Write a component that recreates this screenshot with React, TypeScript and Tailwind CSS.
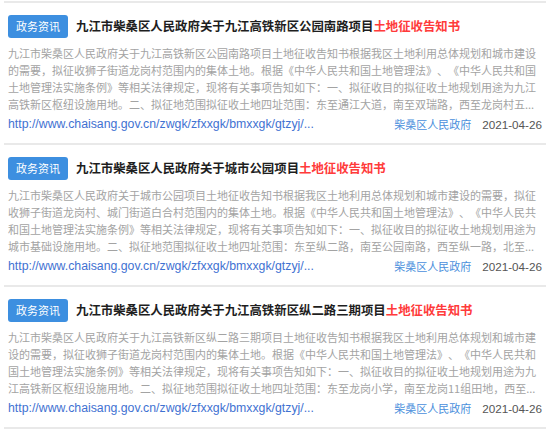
type NewsItem = {
    id: number,
    title: string,
    desc: string
};

const CJK = "font-['Noto_Sans_CJK_SC',sans-serif] [text-spacing-trim:space-all]";

const URL_TEXT = "http://www.chaisang.gov.cn/zwgk/zfxxgk/bmxxgk/gtzyj/...";

const items: NewsItem[] = [
    {
        id: 1,
        title: "九江市柴桑区人民政府关于九江高铁新区公园南路项目",
        desc: "九江市柴桑区人民政府关于九江高铁新区公园南路项目土地征收告知书根据我区土地利用总体规划和城市建设的需要，拟征收狮子街道龙岗村范围内的集体土地。根据《中华人民共和国土地管理法》、《中华人民共和国土地管理法实施条例》等相关法律规定，现将有关事项告知如下：一、拟征收目的拟征收土地规划用途为九江高铁新区枢纽设施用地。二、拟征地范围拟征收土地四址范围：东至通江大道，南至双瑞路，西至龙岗村五..."
    },
    {
        id: 2,
        title: "九江市柴桑区人民政府关于城市公园项目",
        desc: "九江市柴桑区人民政府关于城市公园项目土地征收告知书根据我区土地利用总体规划和城市建设的需要，拟征收狮子街道龙岗村、城门街道白合村范围内的集体土地。根据《中华人民共和国土地管理法》、《中华人民共和国土地管理法实施条例》等相关法律规定，现将有关事项告知如下：一、拟征收目的拟征收土地规划用途为城市基础设施用地。二、拟征地范围拟征收土地四址范围：东至纵二路，南至公园南路，西至纵一路，北至..."
    },
    {
        id: 3,
        title: "九江市柴桑区人民政府关于九江高铁新区纵二路三期项目",
        desc: "九江市柴桑区人民政府关于九江高铁新区纵二路三期项目土地征收告知书根据我区土地利用总体规划和城市建设的需要，拟征收狮子街道龙岗村范围内的集体土地。根据《中华人民共和国土地管理法》、《中华人民共和国土地管理法实施条例》等相关法律规定，现将有关事项告知如下：一、拟征收目的拟征收土地规划用途为九江高铁新区枢纽设施用地。二、拟征地范围拟征收土地四址范围：东至龙岗小学，南至龙岗11组田地，西至..."
    }
];

export default function App() {
    return (
        <div className="w-[550px] h-[430px] bg-white overflow-hidden pt-px px-1">
            <div className="border-b-2 border-[#e9e9e9]">
                {items.map((item) => (
                    <NewsCard key={item.id} item={item} />
                ))}
            </div>
        </div>
    );
}

function NewsCard({ item }: { item: NewsItem }) {
    return (
        <article className="border-t-2 border-[#e9e9e9] px-1 pt-3 pb-[10px]">
            <div className="flex items-center gap-2">
                <span className={`${CJK} shrink-0 rounded-[3px] bg-[#3d8fe0] px-2 text-[11px] leading-[23px] text-white`}>
                    政务资讯
                </span>
                <h4 className={`${CJK} whitespace-nowrap text-[12.4px] font-bold leading-[23px] text-[#1e1e1e]`}>
                    {item.title}
                    <span className="text-[#ff3b3b]">土地征收告知书</span>
                </h4>
            </div>

            <p className={`${CJK} mt-[7px] h-[68px] text-[11px] leading-[17px] text-[#a3a3a3]`}>
                {item.desc}
            </p>

            <div className="mt-[3px] flex items-center leading-[17px]">
                <span className="font-['Liberation_Sans',sans-serif] text-[12.3px] text-[#3f72d2]">
                    {URL_TEXT}
                </span>
                <span className={`${CJK} ml-auto text-[11px] text-[#4a8fdc]`}>柴桑区人民政府</span>
                <span className="ml-[11px] font-['Liberation_Sans',sans-serif] text-[11.7px] text-[#555]">2021-04-26</span>
            </div>
        </article>
    );
}
